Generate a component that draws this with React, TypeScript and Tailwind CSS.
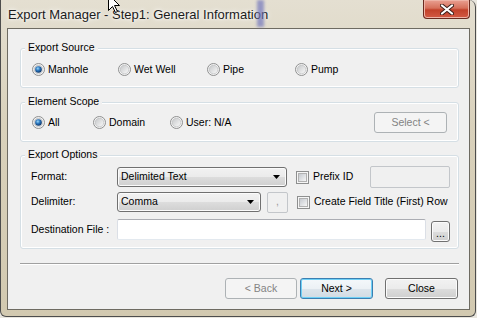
import React from 'react';

const btnBase =
  'flex h-[21px] items-center justify-center rounded-[3px] border leading-none';
const btnNormal =
  'border-[#707070] bg-[linear-gradient(#f2f2f2_0%,#ebebeb_50%,#dddddd_50%,#cfcfcf_100%)] shadow-[inset_0_0_0_1px_#fbfbfb] text-black';
const btnDisabled = 'border-[#adb2b5] bg-[#f4f4f4] text-[#838383]';

function Radio({ checked = false }: { checked?: boolean }) {
  return (
    <svg width="13" height="13" viewBox="0 0 13 13" className="shrink-0">
      <defs>
        <linearGradient id="radioFill" x1="0" y1="0" x2="1" y2="1">
          <stop offset="0" stopColor="#c4c6c8" />
          <stop offset="1" stopColor="#fbfbfb" />
        </linearGradient>
        <radialGradient id="radioDot" cx="0.4" cy="0.35" r="0.7">
          <stop offset="0" stopColor="#9ad8f8" />
          <stop offset="0.45" stopColor="#2a76bf" />
          <stop offset="1" stopColor="#0b2d5a" />
        </radialGradient>
      </defs>
      <circle cx="6.5" cy="6.5" r="6" fill="#f4f4f4" stroke="#8e8f8f" />
      <circle cx="6.5" cy="6.5" r="4.3" fill="url(#radioFill)" stroke="#b5b7b9" strokeWidth="0.6" />
      {checked && <circle cx="6.5" cy="6.5" r="3.3" fill="url(#radioDot)" />}
    </svg>
  );
}

function Check() {
  return (
    <span className="flex h-[13px] w-[13px] shrink-0 border border-[#8e8f8f] bg-[#f6f6f6] p-[1px]">
      <span className="flex-1 border border-[#b1b1b1] bg-[linear-gradient(135deg,#c6cad0,#f6f6f6)]" />
    </span>
  );
}

function RadioItem({ label, checked, width }: { label: string; checked?: boolean; width?: string }) {
  return (
    <div className={`flex items-center gap-[3px] ${width ?? ''}`}>
      <Radio checked={checked} />
      <span>{label}</span>
    </div>
  );
}

function Dropdown({ value, width }: { value: string; width: string }) {
  return (
    <div
      className={`flex h-[20px] ${width} items-center rounded-[3px] border border-[#707070] bg-[linear-gradient(#f2f2f2_0%,#ebebeb_50%,#dddddd_50%,#cfcfcf_100%)] pl-[3px] pr-[6px] shadow-[inset_0_0_0_1px_#fbfbfb]`}
    >
      <span className="flex-1">{value}</span>
      <svg width="7" height="4" viewBox="0 0 7 4">
        <path d="M0 0h7L3.5 4z" fill="#000" />
      </svg>
    </div>
  );
}

function Group({ title, className, children }: { title: string; className: string; children: React.ReactNode }) {
  return (
    <div
      className={`relative ml-[12px] w-[439px] rounded-[3px] border border-[#d5dfe5] shadow-[inset_0_0_0_1px_#ffffff] ${className}`}
    >
      <span className="absolute -top-[8px] left-[4px] bg-[#f0f0f0] px-[3px] leading-[13px]">{title}</span>
      {children}
    </div>
  );
}

export default function App() {
  return (
    <div className="relative h-[318px] w-[477px] overflow-hidden bg-[#e9e6de] font-['Liberation_Sans',Arial,sans-serif] text-[10.5px] text-black">
      <div className="flex h-[317px] w-[476px] flex-col rounded-tr-[7px] rounded-b-[6px] border-x border-b border-[#4d4d4d] bg-[linear-gradient(180deg,#e4dfd1_0%,#d9d1bb_40%,#d2c9b0_100%)] pb-[6px] pl-[6px] pr-[5px]">
        {/* title bar */}
        <div className="relative flex h-[28px] shrink-0">
          <span className="self-center pl-[1px] text-[13px] leading-[15px] text-[#1b1b1b] [text-shadow:0_0_6px_#ffffff,0_0_3px_#ffffff]">
            Export Manager - Step1: General Information
          </span>
          <div className="absolute left-[250px] top-0 h-[27px] w-[7px] bg-[#7478bd] opacity-70 blur-[1.5px]" />
          <div className="ml-auto flex h-[19px] w-[47px] items-center justify-center rounded-b-[4px] border border-t-0 border-[#6a2a1f] bg-[linear-gradient(#e9a092_0%,#d6705b_45%,#c2412a_55%,#d35a44_100%)] shadow-[inset_0_0_0_1px_#eeb3a6]">
            <svg width="14" height="11" viewBox="0 0 14 11">
              <path d="M2 1.5l10 8M12 1.5l-10 8" stroke="#3b1d18" strokeWidth="4" strokeLinecap="round" />
              <path d="M2 1.5l10 8M12 1.5l-10 8" stroke="#ffffff" strokeWidth="2.2" strokeLinecap="round" />
            </svg>
          </div>
        </div>

        {/* client area */}
        <div className="flex flex-1 flex-col border border-[#6e6b62] bg-[#f0f0f0]">
          <Group title="Export Source" className="mt-[19px] h-[40px] pl-[11px] pt-[14px]">
            <div className="flex h-[13px] items-center">
              <RadioItem label="Manhole" checked width="w-[86px]" />
              <RadioItem label="Wet Well" width="w-[89px]" />
              <RadioItem label="Pipe" width="w-[88px]" />
              <RadioItem label="Pump" />
            </div>
          </Group>

          <Group title="Element Scope" className="mt-[14px] h-[40px] pl-[11px] pr-[11px] pt-[9px]">
            <div className="flex h-[21px] items-center">
              <RadioItem label="All" checked width="w-[61px]" />
              <RadioItem label="Domain" width="w-[77px]" />
              <RadioItem label="User: N/A" />
              <div className={`${btnBase} ${btnDisabled} ml-auto w-[73px]`}>Select &lt;</div>
            </div>
          </Group>

          <Group title="Export Options" className="mt-[13px] h-[94px] pl-[10px] pr-[8px] pt-[10px]">
            <div className="flex h-[22px] items-center">
              <span className="w-[86px]">Format:</span>
              <Dropdown value="Delimited Text" width="w-[170px]" />
              <span className="ml-[9px]">
                <Check />
              </span>
              <span className="ml-[4px]">Prefix ID</span>
              <div className="ml-auto h-[22px] w-[80px] rounded-[2px] border border-[#c3c6ca] bg-[#f0f0f0]" />
            </div>
            <div className="mt-[3px] flex h-[22px] items-center">
              <span className="w-[86px]">Delimiter:</span>
              <Dropdown value="Comma" width="w-[144px]" />
              <div className="ml-[6px] flex h-[21px] w-[21px] items-center justify-center rounded-[2px] border border-[#c3c6ca] bg-[#f0f0f0] text-[#9a9a9a]">
                ,
              </div>
              <span className="ml-[9px]">
                <Check />
              </span>
              <span className="ml-[4px]">Create Field Title (First) Row</span>
            </div>
            <div className="mt-[6px] flex items-start">
              <span className="flex h-[21px] w-[86px] items-center">Destination File :</span>
              <div className="h-[21px] w-[309px] rounded-[2px] border border-[#abadb3] border-b-[#e3e9ef] border-x-[#dbdfe6] bg-white" />
              <div className={`${btnBase} ${btnNormal} ml-[5px] mt-[2px] w-[19px] items-end pb-[3px] text-[#555555]`}>...</div>
            </div>
          </Group>

          <div className="ml-[12px] mt-[14px] w-[439px] border-b border-t border-b-white border-t-[#a0a0a0]" />

          <div className="mt-[13px] flex justify-end pr-[11px]">
            <div className={`${btnBase} ${btnDisabled} w-[72px]`}>&lt; Back</div>
            <div className={`${btnBase} ml-[3px] w-[73px] border-[#3c7fb1] bg-[linear-gradient(#f4f8fb_0%,#ecf1f5_50%,#dde5ec_50%,#d2dbe3_100%)] shadow-[inset_0_0_0_1px_#6fd0f6]`}>
              Next &gt;
            </div>
            <div className={`${btnBase} ${btnNormal} ml-[12px] w-[73px]`}>Close</div>
          </div>
        </div>
      </div>

      {/* mouse cursor */}
      <svg className="absolute left-[107px] top-0" width="14" height="16" viewBox="0 0 14 16">
        <path d="M1.5 -5.5V10.5L5.5 6.5L8.5 12.5L10.5 11.5L7.5 5.5H12.5Z" fill="#ffffff" stroke="#000000" strokeWidth="1" />
      </svg>
    </div>
  );
}
